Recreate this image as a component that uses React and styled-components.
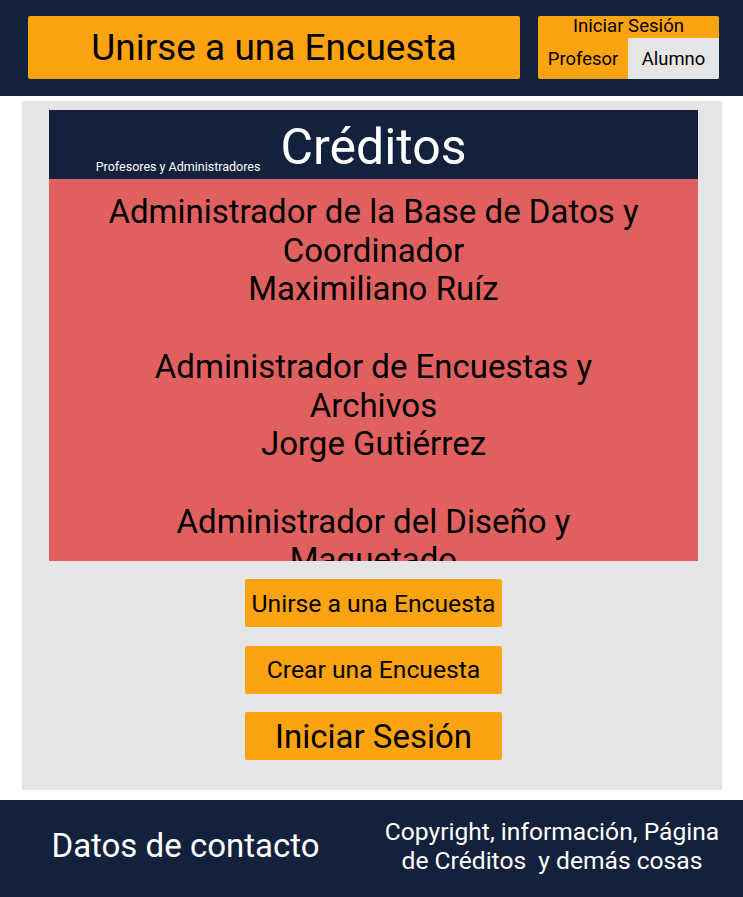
import React from 'react'
import styled, { createGlobalStyle } from 'styled-components'

const navy = '#14213d'
const orange = '#fca311'
const grey = '#e5e5e5'
const red = '#e06060'

const GlobalStyle = createGlobalStyle`
  body {
    margin: 0;
    background: #ffffff;
    font-family: Roboto, "Noto Sans", sans-serif;
  }
`

const credits = [
  { role: 'Administrador de la Base de Datos y Coordinador', name: 'Maximiliano Ruíz' },
  { role: 'Administrador de Encuestas y Archivos', name: 'Jorge Gutiérrez' },
  { role: 'Administrador del Diseño y Maquetado' },
]

const App = () => (
  <>
    <GlobalStyle />
    <Page>
      <Header>
        <JoinButton>Unirse a una Encuesta</JoinButton>
        <LoginBox>
          <LoginLabel>Iniciar Sesión</LoginLabel>
          <LoginOptions>
            <LoginOption>Profesor</LoginOption>
            <LoginOption active>Alumno</LoginOption>
          </LoginOptions>
        </LoginBox>
      </Header>

      <Main>
        <Card>
          <CardHeader>
            <Subtitle>Profesores y Administradores</Subtitle>
            <Title>Créditos</Title>
          </CardHeader>
          <CardBody>
            {credits.map((entry, idx) => (
              <CreditEntry key={idx}>
                <div>{entry.role}</div>
                {entry.name && <div>{entry.name}</div>}
              </CreditEntry>
            ))}
          </CardBody>
        </Card>

        <Actions>
          <ActionButton>Unirse a una Encuesta</ActionButton>
          <ActionButton>Crear una Encuesta</ActionButton>
          <ActionButton large>Iniciar Sesión</ActionButton>
        </Actions>
      </Main>

      <Footer>
        <Contact>Datos de contacto</Contact>
        <Legal>Copyright, información, Página de Créditos&nbsp; y demás cosas</Legal>
      </Footer>
    </Page>
  </>
)

export default App

const Page = styled.div`
  display: flex;
  flex-direction: column;
  width: 743px;
`

const Header = styled.header`
  display: flex;
  align-items: center;
  gap: 18px;
  height: 96px;
  padding: 0 24px 1px 28px;
  box-sizing: border-box;
  background: ${navy};
`

const JoinButton = styled.div`
  display: flex;
  align-items: center;
  justify-content: center;
  flex: 1;
  height: 63px;
  border-radius: 2px;
  background: ${orange};
  color: #000;
  font-size: 37px;
`

const LoginBox = styled.div`
  display: flex;
  flex-direction: column;
  width: 181px;
  height: 63px;
  border-radius: 2px;
  overflow: hidden;
  background: ${orange};
`

const LoginLabel = styled.div`
  height: 22px;
  line-height: 20px;
  text-align: center;
  font-size: 18.6px;
  color: #000;
`

const LoginOptions = styled.div`
  display: grid;
  grid-template-columns: 90px 1fr;
  flex: 1;
`

const LoginOption = styled.div`
  display: flex;
  align-items: center;
  justify-content: center;
  font-size: 18.4px;
  color: #000;
  background: ${p => (p.active ? grey : 'transparent')};
`

const Main = styled.main`
  display: flex;
  flex-direction: column;
  align-items: center;
  margin: 5px 21px 10px 22px;
  padding: 9px 24px 30px 27px;
  background: ${grey};
`

const Card = styled.section`
  display: flex;
  flex-direction: column;
  align-self: stretch;
`

const CardHeader = styled.div`
  display: grid;
  grid-template-columns: 1fr auto 1fr;
  height: 69px;
  background: ${navy};
  color: #fff;
`

const Subtitle = styled.div`
  justify-self: end;
  align-self: end;
  margin: 0 20px 10px 0;
  font-size: 12.5px;
`

const Title = styled.h1`
  margin: 0;
  font-size: 50px;
  font-weight: 400;
  line-height: 74px;
`

const CardBody = styled.div`
  height: 382px;
  overflow: hidden;
  padding: 14px 52px 0;
  box-sizing: border-box;
  background: ${red};
  color: #000;
  font-size: 33px;
  line-height: 38.7px;
  text-align: center;
`

const CreditEntry = styled.div`
  margin-bottom: 38.7px;
`

const Actions = styled.div`
  display: flex;
  flex-direction: column;
  gap: 18.5px;
  margin-top: 18px;
`

const ActionButton = styled.button`
  width: 257px;
  height: 48px;
  padding: 0;
  border: none;
  border-radius: 2px;
  background: ${orange};
  color: #000;
  font-family: Roboto, "Noto Sans", sans-serif;
  font-size: ${p => (p.large ? '33px' : '24.7px')};
`

const Footer = styled.footer`
  display: flex;
  align-items: center;
  height: 97px;
  padding-bottom: 6px;
  box-sizing: border-box;
  background: ${navy};
  color: #fff;
`

const Contact = styled.div`
  width: 371px;
  text-align: center;
  font-size: 33px;
`

const Legal = styled.div`
  flex: 1;
  padding: 0 20px 0 10px;
  text-align: center;
  font-size: 24.6px;
  line-height: 29px;
`
